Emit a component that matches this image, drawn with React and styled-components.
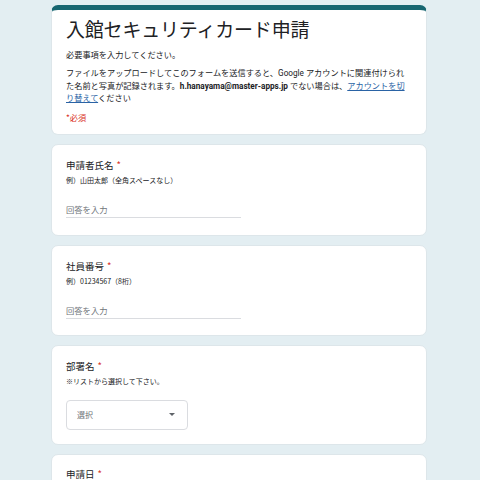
import React from "react";
import styled, { createGlobalStyle } from "styled-components";

const Global = createGlobalStyle`
  html, body { margin: 0; padding: 0; background: #e3eef2; }
  body { font-family: Roboto, "Noto Sans CJK JP", sans-serif; color: #202124; }
`;

const Page = styled.div`
  display: flex;
  flex-direction: column;
  gap: 9px;
  width: 376px;
  margin-left: 51px;
  padding-top: 5px;
  padding-bottom: 20px;
`;

const Card = styled.section`
  background: #fff;
  border: 1px solid #dde6ea;
  border-radius: 7px;
  box-sizing: border-box;
  padding: ${(p) => p.$pad || "13px 14px 16px"};
  ${(p) => p.$accent && `border-top: 5px solid #176671;`}
`;

const Title = styled.h1`
  margin: 0;
  font-family: "Noto Sans CJK JP", sans-serif;
  font-weight: 400;
  font-size: 19px;
  line-height: 26px;
  letter-spacing: -0.2px;
`;

const Text = styled.p`
  margin: ${(p) => p.$mt || 0}px 0 0;
  font-family: Roboto, "Noto Sans CJK JP", sans-serif;
  font-size: 8.2px;
  line-height: ${(p) => p.$lh || 12}px;
  color: #202124;
  white-space: nowrap;
`;

const Bold = styled.b`
  font-weight: 700;
`;

const Link = styled.a`
  color: #2a63a5;
  text-decoration: underline;
`;

const Required = styled.p`
  margin: 6px 0 0;
  font-family: "Noto Sans CJK JP", sans-serif;
  font-size: 8.2px;
  line-height: 12px;
  color: #d93025;
`;

const QTitle = styled.div`
  font-family: "Noto Sans CJK JP", sans-serif;
  font-size: 9.5px;
  line-height: 14px;
  color: #202124;
`;

const Star = styled.span`
  color: #d93025;
  margin-left: 3px;
`;

const Hint = styled.div`
  margin-top: 3px;
  font-family: "Noto Sans CJK JP", sans-serif;
  font-size: 7px;
  line-height: 10px;
  color: #202124;
`;

const Input = styled.div`
  margin-top: 17px;
  width: 175px;
  border-bottom: 1px solid #dadce0;
  font-family: "Noto Sans CJK JP", sans-serif;
  font-size: 8.3px;
  line-height: 14px;
  padding-bottom: 1px;
  color: #70757a;
`;

const Select = styled.div`
  margin-top: 14px;
  width: 122px;
  height: 30px;
  box-sizing: border-box;
  border: 1px solid #dadce0;
  border-radius: 4px;
  display: flex;
  align-items: center;
  justify-content: space-between;
  padding: 0 12px 0 10px;
  font-family: "Noto Sans CJK JP", sans-serif;
  font-size: 8px;
  color: #70757a;
`;

const Caret = styled.span`
  width: 0;
  height: 0;
  border-left: 3px solid transparent;
  border-right: 3px solid transparent;
  border-top: 3px solid #5f6368;
`;

function Question({ title, hint, children, pad }) {
  return (
    <Card $pad={pad}>
      <QTitle>
        {title}
        <Star>*</Star>
      </QTitle>
      {hint && <Hint>{hint}</Hint>}
      {children}
    </Card>
  );
}

export default function App() {
  return (
    <>
      <Global />
      <Page>
        <Card $accent $pad="6px 14px 11px">
          <Title>入館セキュリティカード申請</Title>
          <Text $mt={7}>必要事項を入力してください。</Text>
          <Text $mt={6} $lh={12.5}>
            ファイルをアップロードしてこのフォームを送信すると、Google アカウントに関連付けられ
            <br />
            た名前と写真が記録されます。<Bold>h.hanayama@master-apps.jp</Bold> でない場合は、
            <Link>
              アカウントを切
              <br />
              り替えて
            </Link>
            ください
          </Text>
          <Required>*必須</Required>
        </Card>
        <Question title="申請者氏名" hint="例）山田太郎（全角スペースなし）" pad="13px 14px 17px">
          <Input>回答を入力</Input>
        </Question>
        <Question title="社員番号" hint="例）01234567（8桁）">
          <Input>回答を入力</Input>
        </Question>
        <Question title="部署名" hint="※リストから選択して下さい。" pad="13px 14px 14px">
          <Select>
            選択
            <Caret />
          </Select>
        </Question>
        <Question title="申請日" pad="12px 14px 40px" />
      </Page>
    </>
  );
}
